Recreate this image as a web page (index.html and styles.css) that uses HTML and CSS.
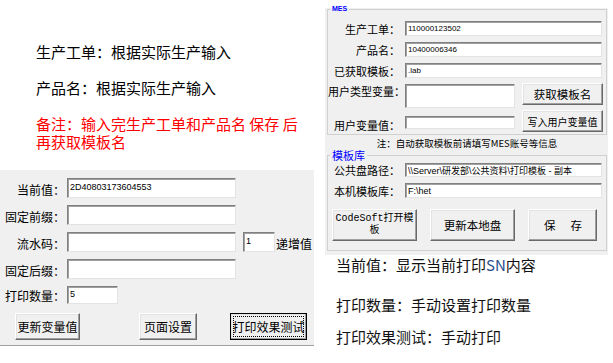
FILE: index.html
```html
<!DOCTYPE html>
<html lang="zh-CN">

<head>
  <meta charset="UTF-8">
  <meta name="viewport" content="width=device-width, initial-scale=1.0">
  <title>打印设置说明</title>
  <link rel="stylesheet" href="styles.css">
</head>

<body>
  <div class="page">
    <div class="col-left">
      <div class="notes">
        <p>生产工单：根据实际生产输入</p>
        <p>产品名：根据实际生产输入</p>
        <p class="warn">备注：输入完生产工单和产品名 保存 后再获取模板名</p>
      </div>

      <div class="print-panel">
        <div class="row">
          <label class="lbl">当前值：</label>
          <input class="field" type="text" value="2D40803173604553">
        </div>
        <div class="row">
          <label class="lbl">固定前缀：</label>
          <input class="field" type="text" value="">
        </div>
        <div class="row">
          <label class="lbl">流水码：</label>
          <input class="field" type="text" value="">
          <input class="field step" type="text" value="1">
          <span class="suffix">递增值</span>
        </div>
        <div class="row">
          <label class="lbl">固定后缀：</label>
          <input class="field" type="text" value="">
        </div>
        <div class="row row-qty">
          <label class="lbl">打印数量：</label>
          <input class="field qty" type="text" value="5">
        </div>
        <div class="btn-row">
          <button class="btn btn-update">更新变量值</button>
          <button class="btn btn-page">页面设置</button>
          <button class="btn btn-test">打印效果测试</button>
        </div>
      </div>
    </div>

    <div class="col-right">
      <div class="form-panel">
        <fieldset class="group mes">
          <legend>MES</legend>
          <div class="mrow">
            <label class="mlbl">生产工单：</label>
            <input class="mfield" type="text" value="110000123502">
          </div>
          <div class="mrow">
            <label class="mlbl">产品名：</label>
            <input class="mfield" type="text" value="10400006346">
          </div>
          <div class="mrow">
            <label class="mlbl">已获取模板：</label>
            <input class="mfield" type="text" value=".lab">
          </div>
          <div class="mrow mrow-type">
            <label class="mlbl">用户类型变量：</label>
            <textarea class="mfield area"></textarea>
            <button class="btn mbtn">获取模板名</button>
          </div>
          <div class="mrow mrow-value">
            <label class="mlbl">用户变量值：</label>
            <input class="mfield short" type="text" value="">
            <button class="btn mbtn small">写入用户变量值</button>
          </div>
        </fieldset>

        <p class="note">注：自动获取模板前请填写MES账号等信息</p>

        <fieldset class="group lib">
          <legend>模板库</legend>
          <div class="mrow">
            <label class="mlbl">公共盘路径：</label>
            <input class="mfield path" type="text" value="\\Server\研发部\公共资料\打印模板 - 副本">
          </div>
          <div class="mrow mrow-local">
            <label class="mlbl">本机模板库：</label>
            <input class="mfield path" type="text" value="F:\het">
          </div>
          <div class="lbtn-row">
            <button class="btn lbtn codesoft">CodeSoft打开模板</button>
            <button class="btn lbtn">更新本地盘</button>
            <button class="btn lbtn save">保存</button>
          </div>
        </fieldset>
      </div>

      <div class="tips">
        <p>当前值：显示当前打印<span class="sn">SN</span>内容</p>
        <p>打印数量：手动设置打印数量</p>
        <p>打印效果测试：手动打印</p>
      </div>
    </div>
  </div>
</body>

</html>
```

FILE: styles.css
```css
:root {
  --panel-color: #f0f0f0;
  --text-color: #000000;
  --group-line: #d0d0d0;
  --legend-color: #0000ff;
}

body {
  margin: 0;
  background-color: #ffffff;
  color: var(--text-color);
  font-family: "Noto Sans CJK SC", sans-serif;
}

.page {
  display: flex;
  align-items: flex-start;
}

/* Left column */
.col-left {
  width: 314px;
}

.notes {
  height: 170px;
  box-sizing: border-box;
  padding: 43px 0 0 36px;
  font-size: 15px;
  line-height: 18px;
}

.notes p {
  margin: 0 0 18px;
}

.notes .warn {
  color: #ff0000;
  width: 268px;
  margin: 0;
}

.print-panel {
  display: flex;
  flex-direction: column;
  gap: 7px;
  background-color: var(--panel-color);
  border-bottom: 1px solid #a0a0a0;
  padding: 8px 0 5px;
}

.row {
  display: flex;
  align-items: flex-end;
  height: 20px;
}

.lbl {
  width: 65px;
  margin-right: 2px;
  text-align: right;
  font-size: 12px;
  line-height: 16px;
  white-space: nowrap;
}

.field,
.mfield {
  box-sizing: border-box;
  margin: 0;
  background-color: #ffffff;
  border: 1px solid;
  border-color: #808080 #e3e3e3 #e3e3e3 #808080;
  box-shadow: inset 1px 1px 0 #a0a0a0;
  color: var(--text-color);
  outline: none;
}

.field {
  width: 169px;
  height: 20px;
  padding: 0 2px 3px;
  font: 9px "Liberation Sans", sans-serif;
}

.field.step {
  width: 32px;
  margin-left: 7px;
}

.suffix {
  font-size: 12px;
  line-height: 16px;
  margin-left: 1px;
  white-space: nowrap;
}

.row-qty {
  height: 18px;
}

.field.qty {
  width: 51px;
  height: 18px;
}

.btn {
  margin: 0;
  padding: 0;
  background-color: var(--panel-color);
  border: 1px solid;
  border-color: #ffffff #696969 #696969 #ffffff;
  box-shadow: inset -1px -1px 0 #a0a0a0, inset 1px 1px 0 #e3e3e3;
  color: var(--text-color);
  font-family: "Noto Sans CJK SC", sans-serif;
}

.btn-row {
  display: flex;
  padding-left: 15px;
  margin-top: 2px;
}

.btn-row .btn {
  height: 27px;
  font-size: 12px;
  white-space: nowrap;
}

.btn-update {
  width: 65px;
}

.btn-page {
  width: 58px;
  margin-left: 59px;
}

.btn-test {
  width: 77px;
  margin-left: 33px;
  border-color: #000000;
  outline: 1px dotted #000000;
  outline-offset: -4px;
}

/* Right column */
.col-right {
  width: 283px;
  margin-left: 11px;
}

.form-panel {
  display: flow-root;
  height: 247px;
  box-sizing: border-box;
  margin-top: 8px;
  padding: 0 1px 0 2px;
  background-color: var(--panel-color);
}

.group {
  margin: 0;
  min-width: 0;
  border: 1px solid var(--group-line);
}

.group legend {
  margin-left: 2px;
  padding: 0 2px;
  color: var(--legend-color);
}

.mes {
  margin-top: -2px;
  padding: 9px 0 2px;
}

.mes legend {
  font: bold 7px/6px "Liberation Sans", sans-serif;
}

.mrow {
  display: flex;
  align-items: center;
  height: 15px;
  margin-bottom: 6px;
}

.mlbl {
  width: 72px;
  margin-right: 5px;
  text-align: right;
  font-size: 11px;
  line-height: 14px;
  white-space: nowrap;
}

.mfield {
  width: 197px;
  height: 15px;
  padding: 0 2px;
  font: 8px "Liberation Sans", sans-serif;
}

.mrow-type {
  align-items: flex-start;
  height: 24px;
  margin-bottom: 2px;
}

.mfield.area {
  width: 110px;
  height: 24px;
  resize: none;
}

.mbtn {
  width: 81px;
  height: 22px;
  margin-left: 7px;
  font-size: 11.5px;
}

.mrow-type .mbtn {
  margin-top: -1px;
}

.mrow-value {
  align-items: flex-end;
  height: 22px;
  margin-bottom: 0;
}

.mfield.short {
  width: 110px;
  height: 13px;
  margin-bottom: 3px;
}

.mbtn.small {
  font-size: 10px;
}

.note {
  margin: 3px 0 0;
  text-align: center;
  font-size: 9.5px;
  line-height: 11px;
}

.lib {
  padding: 2px 0 9px;
}

.lib legend {
  font-size: 11px;
  line-height: 12px;
}

.lib .mrow {
  height: 14px;
}

.lib .mrow-local {
  height: 15px;
  margin-bottom: 11px;
}

.mfield.path {
  height: 100%;
  font: 9px "Liberation Sans", "Noto Sans CJK SC", sans-serif;
}

.lbtn-row {
  display: flex;
  gap: 13px;
  padding-left: 4px;
}

.lbtn {
  width: 85px;
  height: 32px;
  font-size: 11.5px;
}

.lbtn.codesoft {
  font-family: "Liberation Mono", "Noto Sans CJK SC", monospace;
  font-size: 10px;
  line-height: 12px;
}

.lbtn.save {
  width: 69px;
  padding-left: 15px;
  letter-spacing: 15px;
  white-space: nowrap;
}

.tips {
  padding: 1px 0 0 11px;
  font-size: 15px;
  line-height: 18px;
  color: #111111;
}

.tips p {
  margin: 0 0 14px;
}

.tips p:first-child {
  margin-bottom: 22px;
}

.sn {
  color: #2b4f8f;
}
```
